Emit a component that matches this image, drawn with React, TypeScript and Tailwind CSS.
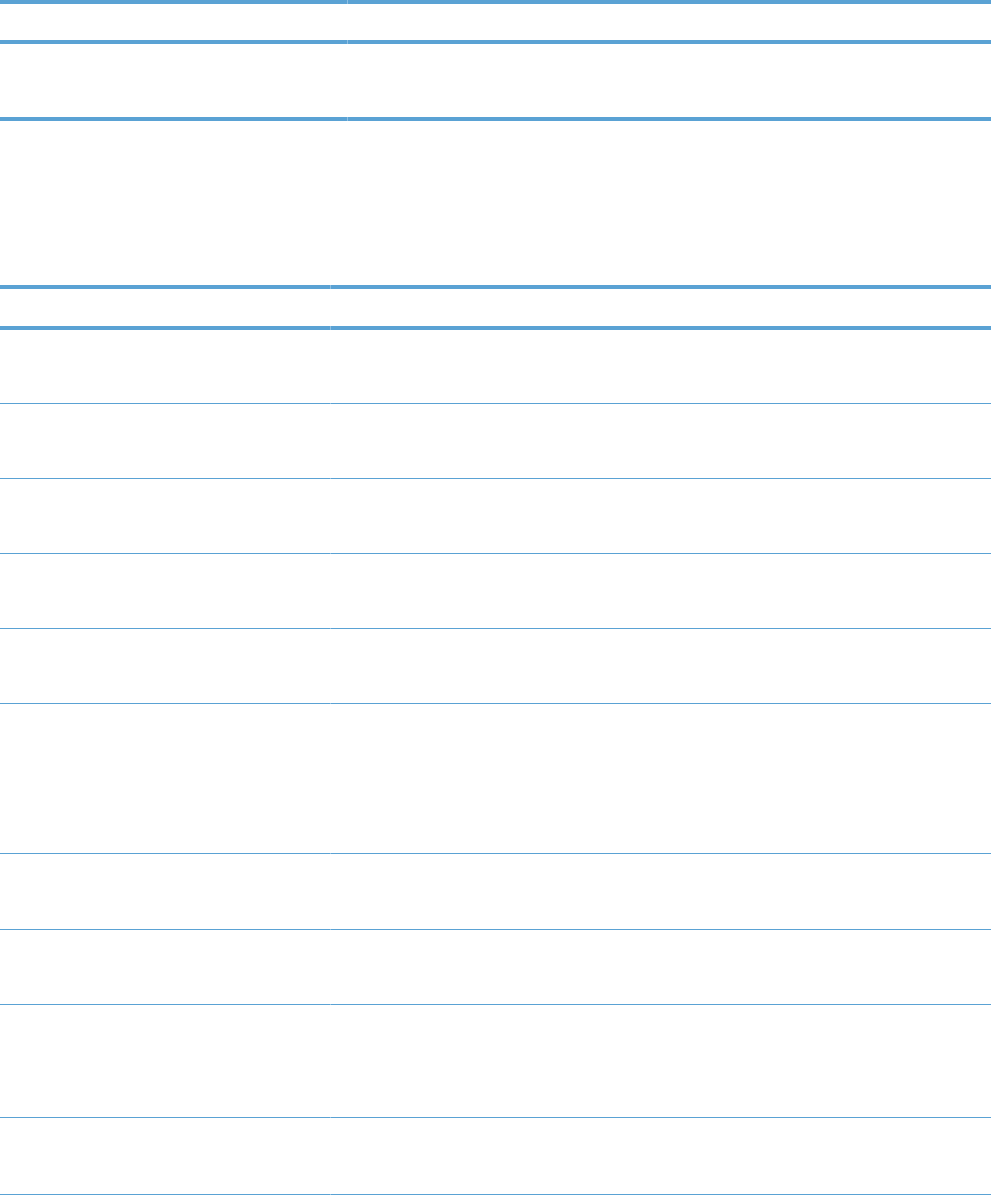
import React from 'react';

// Blue table rules, empty cells (layout-only page)
const BLUE = 'bg-[#5aa2d4]';

const Rule = ({ split, thick }: { split: number; thick?: boolean }) => (
  <div className={`flex w-[991px] ${thick ? 'h-[4px]' : 'h-px'}`}>
    <div className={BLUE} style={{ width: split }} />
    <div className="w-px bg-[#8fc0e3]" />
    <div className={`flex-1 ${BLUE}`} />
  </div>
);

const Row = ({ height, split }: { height: number; split: number }) => (
  <div className="flex w-[991px]" style={{ height }}>
    <div style={{ width: split }} />
    <div className="flex-1" />
  </div>
);

const bodyRows = [73, 74, 74, 74, 74, 149, 75, 74, 112, 76];

export default function App() {
  return (
    <div className="w-[992px] h-[1195px] bg-white overflow-hidden font-['Liberation_Sans',sans-serif]">
      <section>
        <Rule split={347} thick />
        <Row height={36} split={347} />
        <Rule split={347} thick />
        <Row height={73} split={347} />
        <Rule split={347} thick />
      </section>

      <section className="mt-[164px]">
        <Rule split={330} thick />
        <Row height={37} split={330} />
        <Rule split={330} thick />
        {bodyRows.map((h, i) => (
          <div key={i}>
            <Row height={h} split={330} />
            <Rule split={330} />
          </div>
        ))}
      </section>
    </div>
  );
}
